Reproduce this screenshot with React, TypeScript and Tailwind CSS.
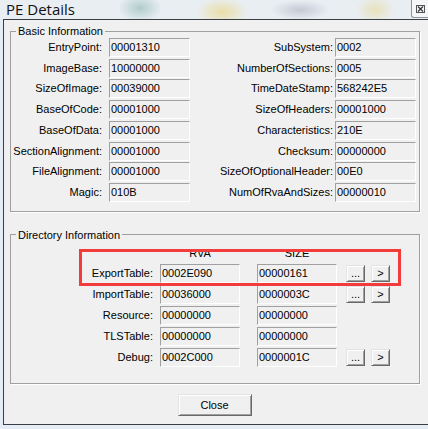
import React from "react";

const basicLeft: [string, string][] = [
	["EntryPoint", "00001310"],
	["ImageBase", "10000000"],
	["SizeOfImage", "00039000"],
	["BaseOfCode", "00001000"],
	["BaseOfData", "00001000"],
	["SectionAlignment", "00001000"],
	["FileAlignment", "00001000"],
	["Magic", "010B"],
];

const basicRight: [string, string][] = [
	["SubSystem", "0002"],
	["NumberOfSections", "0005"],
	["TimeDateStamp", "568242E5"],
	["SizeOfHeaders", "00001000"],
	["Characteristics", "210E"],
	["Checksum", "00000000"],
	["SizeOfOptionalHeader", "00E0"],
	["NumOfRvaAndSizes", "00000010"],
];

const directories: { name: string; rva: string; size: string; buttons: boolean }[] = [
	{ name: "ExportTable", rva: "0002E090", size: "00000161", buttons: true },
	{ name: "ImportTable", rva: "00036000", size: "0000003C", buttons: true },
	{ name: "Resource", rva: "00000000", size: "00000000", buttons: false },
	{ name: "TLSTable", rva: "00000000", size: "00000000", buttons: false },
	{ name: "Debug", rva: "0002C000", size: "0000001C", buttons: true },
];

const Field = ({ value, width }: { value: string; width: string }) => (
	<div
		className={
			"h-[19px] shrink-0 border-t border-l border-b border-r border-t-[#a0a0a0] border-l-[#a0a0a0] border-b-white border-r-white pl-[1px] leading-[16px] text-black " +
			width
		}
	>
		{value}
	</div>
);

const SmallButton = ({ label }: { label: string }) => (
	<div className="flex h-[17px] w-[19px] shrink-0 items-center justify-center border border-t-[#e3e3e3] border-l-[#e3e3e3] border-b-[#696969] border-r-[#696969] bg-[#f0f0f0] shadow-[inset_1px_1px_0_#ffffff,inset_-1px_-1px_0_#a0a0a0] text-[11px] leading-none">
		{label}
	</div>
);

export default function App() {
	return (
		<div
			className="relative h-[429px] w-[428px] overflow-hidden bg-[#e4edf6] text-[11px] text-black"
			style={{ fontFamily: '"Liberation Sans", Arial, sans-serif' }}
		>
			{/* title bar over blurred glass */}
			<div className="flex h-[19px] items-start justify-between bg-[#e9eef3] bg-[radial-gradient(ellipse_22px_14px_at_140px_8px,rgba(70,140,130,0.35),transparent),radial-gradient(ellipse_26px_14px_at_222px_12px,rgba(235,205,90,0.5),transparent),radial-gradient(ellipse_30px_10px_at_300px_10px,rgba(110,120,140,0.3),transparent),radial-gradient(ellipse_20px_14px_at_375px_10px,rgba(230,210,120,0.45),transparent)]">
				<div
					className="pl-[6px] pt-[1px] text-[15px] leading-[17px] text-[#111]"
					style={{ fontFamily: '"Open Sans", "Noto Sans", sans-serif' }}
				>
					PE Details
				</div>
				<div className="flex h-[18px] w-[17px] items-center justify-center rounded-bl-[3px] border-b border-l border-[#8d949c] bg-[#f4f6f8]">
					<svg width="9" height="8" viewBox="0 0 9 8">
						<rect x="0.5" y="0.5" width="8" height="7" fill="none" stroke="#555" />
						<path d="M2 1.5 L7 6.5 M7 1.5 L2 6.5" stroke="#333" strokeWidth="1.2" />
					</svg>
				</div>
			</div>

			{/* dialog client area */}
			<div className="ml-[3px] flex h-[406px] w-[430px] flex-col border-t border-l border-b border-[#3b3e42] bg-[#f0f0f0]">
				<fieldset className="ml-[6px] mt-[4px] w-[410px] border border-[#a0a0a0] pb-[9px] shadow-[1px_1px_0_#ffffff]">
					<legend className="ml-[5px] px-[2px] text-[11px] leading-[14px]">Basic Information</legend>
					<div className="flex flex-row">
						<div className="flex flex-col gap-y-[1.71px]">
							{basicLeft.map(([label, value]) => (
								<div key={label} className="flex h-[19px] flex-row items-center">
									<div className="w-[91px] text-right leading-[19px]">{label}:</div>
									<div className="w-[7px]" />
									<Field value={value} width="w-[81px]" />
								</div>
							))}
						</div>
						<div className="flex flex-col gap-y-[1.71px]">
							{basicRight.map(([label, value]) => (
								<div key={label} className="flex h-[19px] flex-row items-center">
									<div className="w-[143px] text-right leading-[19px]">{label}:</div>
									<div className="w-[2px]" />
									<Field value={value} width="w-[81px]" />
								</div>
							))}
						</div>
					</div>
				</fieldset>

				<fieldset className="ml-[6px] mt-[16px] w-[410px] border border-[#a0a0a0] pb-[16px] shadow-[1px_1px_0_#ffffff]">
					<legend className="ml-[5px] px-[2px] text-[11px] leading-[14px]">Directory Information</legend>
					<div className="flex h-[22px] flex-row items-center">
						<div className="w-[149px]" />
						<div className="w-[80px] text-center">RVA</div>
						<div className="w-[17px]" />
						<div className="w-[80px] text-center">SIZE</div>
					</div>
					<div className="flex flex-col gap-y-[2px]">
						{directories.map((d) => (
							<div key={d.name} className="flex h-[19px] flex-row items-center">
								<div className="w-[142px] text-right leading-[19px]">{d.name}:</div>
								<div className="w-[7px]" />
								<Field value={d.rva} width="w-[80px]" />
								<div className="w-[17px]" />
								<Field value={d.size} width="w-[80px]" />
								{d.buttons && (
									<div className="ml-[9px] flex flex-row gap-[6px]">
										<SmallButton label="..." />
										<SmallButton label=">" />
									</div>
								)}
							</div>
						))}
					</div>
				</fieldset>

				<div className="mt-[10px] flex justify-center pr-[8px]">
					<div className="flex h-[22px] w-[74px] items-center justify-center border border-t-[#e3e3e3] border-l-[#e3e3e3] border-b-[#696969] border-r-[#696969] bg-[#f0f0f0] shadow-[inset_1px_1px_0_#ffffff,inset_-1px_-1px_0_#a0a0a0] text-[11px]">
						Close
					</div>
				</div>
			</div>

			{/* red highlight drawn over the export table row */}
			<div className="absolute left-[79px] top-[249px] h-[37px] w-[322px] border-[3px] border-[#f23c3c]" />
		</div>
	);
}
